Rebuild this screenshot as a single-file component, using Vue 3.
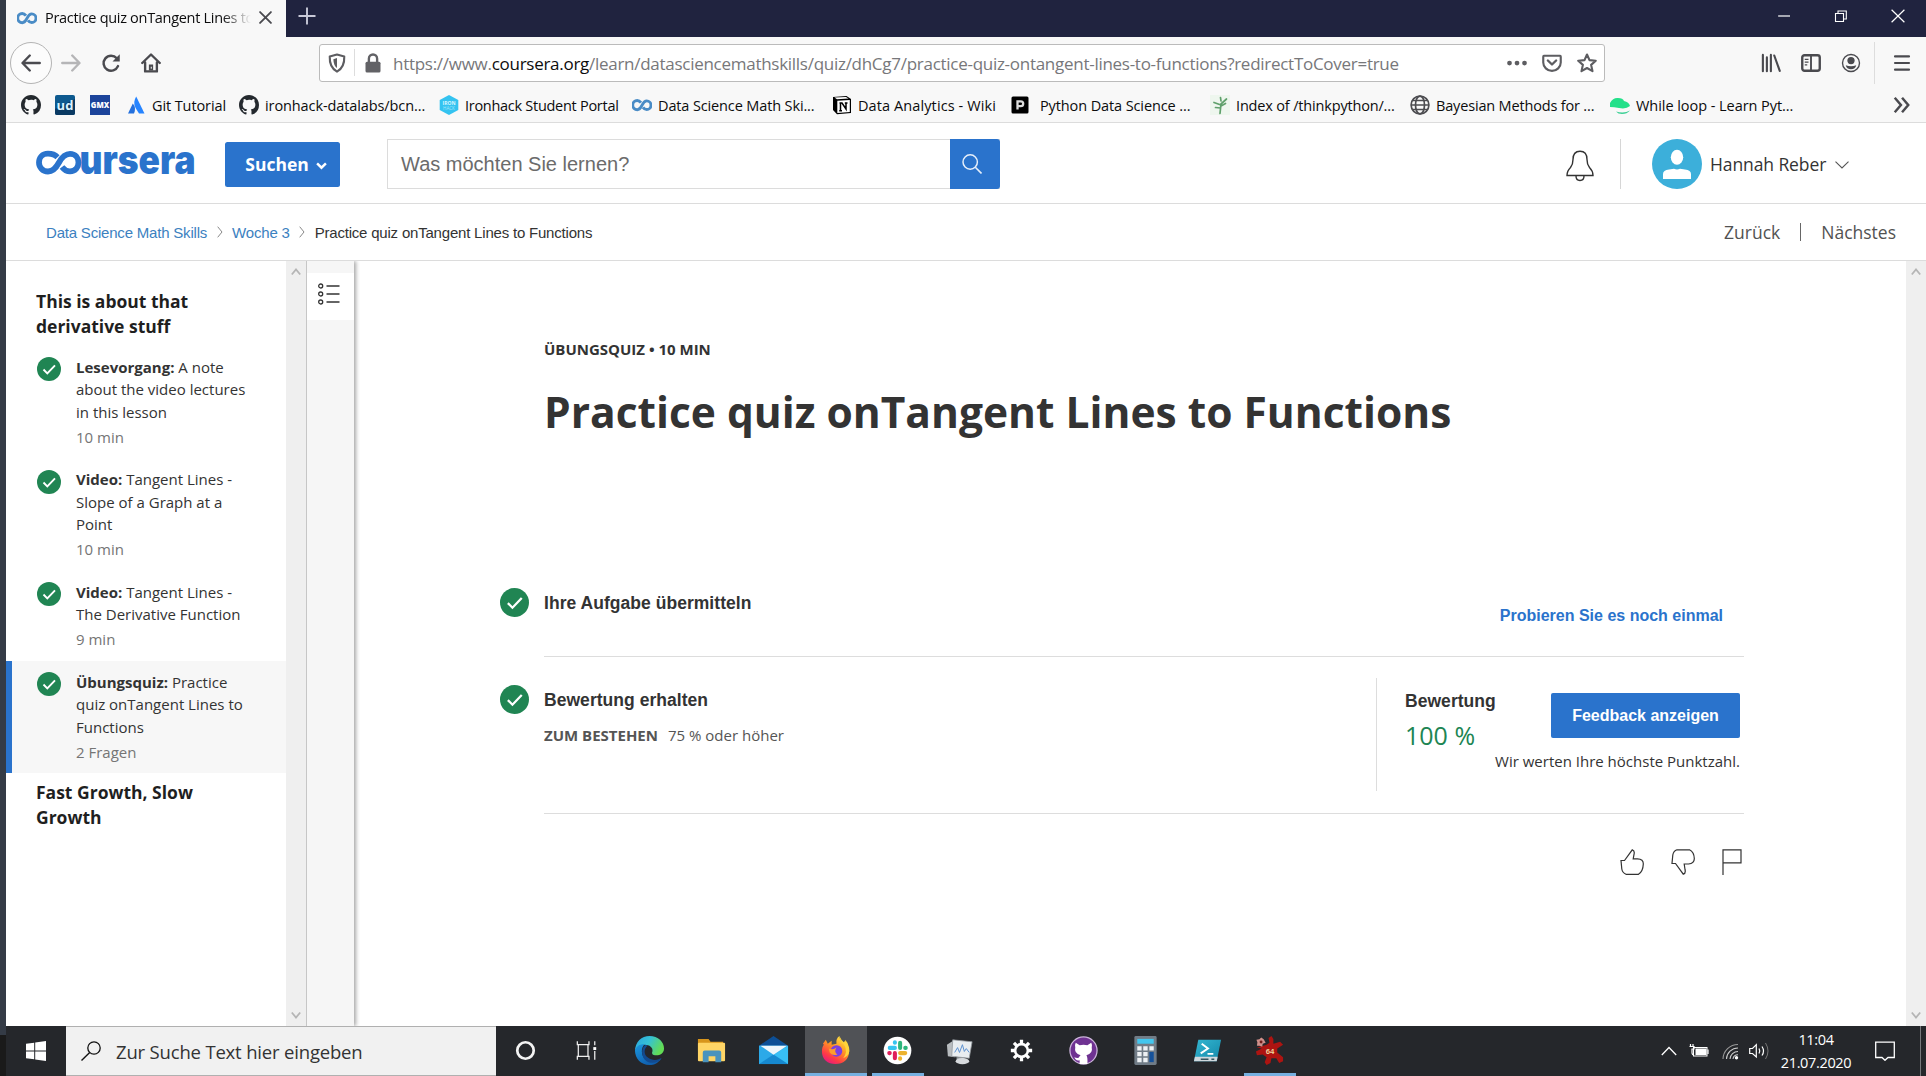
<script setup>
const bookmarks = [
  { icon: 'github', width: 34 },
  { icon: 'ud', width: 35 },
  { icon: 'gmx', width: 36 },
  { icon: 'atlassian', label: 'Git Tutorial', width: 113, track: -0.1 },
  { icon: 'github', label: 'ironhack-datalabs/bcn...', width: 200, track: -0.1 },
  { icon: 'ironhack', label: 'Ironhack Student Portal', width: 193, track: -0.28 },
  { icon: 'infinity', label: 'Data Science Math Ski...', width: 200, track: -0.13 },
  { icon: 'notion', label: 'Data Analytics - Wiki', width: 178, track: 0.1 },
  { icon: 'pbook', label: 'Python Data Science ...', width: 200, track: -0.11, wide: true },
  { icon: 'plant', label: 'Index of /thinkpython/...', width: 200, track: -0.17 },
  { icon: 'globe', label: 'Bayesian Methods for ...', width: 200, track: -0.17 },
  { icon: 'snake', label: 'While loop - Learn Pyt...', width: 210, track: -0.05 },
]

const lessons = [
  { kind: 'Lesevorgang:', title: 'A note about the video lectures in this lesson', meta: '10 min' },
  { kind: 'Video:', title: 'Tangent Lines - Slope of a Graph at a Point', meta: '10 min' },
  { kind: 'Video:', title: 'Tangent Lines - The Derivative Function', meta: '9 min' },
  { kind: 'Übungsquiz:', title: 'Practice quiz onTangent Lines to Functions', meta: '2 Fragen', active: true },
]

const apps = [
  { icon: 'cortana' },
  { icon: 'taskview' },
  { icon: 'edge' },
  { icon: 'explorer' },
  { icon: 'mail' },
  { icon: 'firefox', state: 'focused' },
  { icon: 'slack', state: 'running' },
  { icon: 'monitor' },
  { icon: 'gear' },
  { icon: 'ghdesktop' },
  { icon: 'calc' },
  { icon: 'powershell' },
  { icon: 'irfan', state: 'running' },
]
</script>

<template>
  <svg class="defs" width="0" height="0" aria-hidden="true">
    <defs>
      <linearGradient id="gEdgeA" x1="0" y1="0" x2="1" y2="0.4">
        <stop offset="0" stop-color="#2aa5e0" /><stop offset="0.5" stop-color="#35c1d6" /><stop offset="1" stop-color="#62dc56" />
      </linearGradient>
      <linearGradient id="gEdgeB" x1="0" y1="0" x2="0.6" y2="1">
        <stop offset="0" stop-color="#1b98e0" /><stop offset="1" stop-color="#0f5cab" />
      </linearGradient>
      <linearGradient id="gFox" x1="0.8" y1="0" x2="0.2" y2="1">
        <stop offset="0" stop-color="#fff04a" /><stop offset="0.4" stop-color="#ff9a22" /><stop offset="0.75" stop-color="#ff3b45" /><stop offset="1" stop-color="#e31587" />
      </linearGradient>
      <linearGradient id="gPs" x1="0" y1="0" x2="1" y2="1">
        <stop offset="0" stop-color="#35b7d2" /><stop offset="1" stop-color="#1287a8" />
      </linearGradient>
    </defs>
    <symbol id="infinity" viewBox="0 0 20 20">
      <path d="M9 7.400C7.600 5.600 6.400 5.200 5.300 5.200A4.600 4.600 0 0 0 5.300 14.400C10.300 14.400 9.600 5.600 14.700 5.600A4.300 4.300 0 0 1 14.700 14.200C13.400 14.200 12 13.400 11 12" fill="none" stroke="#4a8cc6" stroke-width="2.900" transform="translate(0 .3)" />
    </symbol>
    <symbol id="github" viewBox="0 0 16 16">
      <path fill="#24292e" d="M8 0C3.58 0 0 3.58 0 8c0 3.54 2.29 6.53 5.47 7.59.4.07.55-.17.55-.38 0-.19-.01-.82-.01-1.49-2.01.37-2.53-.49-2.69-.94-.09-.23-.48-.94-.82-1.13-.28-.15-.68-.52-.01-.53.63-.01 1.08.58 1.23.82.72 1.21 1.87.87 2.33.66.07-.52.28-.87.51-1.07-1.78-.2-3.64-.89-3.64-3.95 0-.87.31-1.59.82-2.15-.08-.2-.36-1.02.08-2.12 0 0 .67-.21 2.2.82A7.600 7.600 0 0 1 8 3.86c.68 0 1.36.09 2 .27 1.53-1.04 2.2-.82 2.2-.82.44 1.1.16 1.92.08 2.12.51.56.82 1.27.82 2.15 0 3.07-1.87 3.75-3.65 3.95.29.25.54.73.54 1.48 0 1.07-.01 1.93-.01 2.2 0 .21.15.46.55.38A8.010 8.010 0 0 0 16 8c0-4.42-3.58-8-8-8z" />
    </symbol>
    <symbol id="ud" viewBox="0 0 20 20">
      <rect width="20" height="20" rx="2" fill="#0e5a8f" /><path d="M0 14L20 4v14a2 2 0 0 1-2 2H2a2 2 0 0 1-2-2z" fill="#0a3a63" />
    </symbol>
    <symbol id="gmx" viewBox="0 0 20 20"><rect width="20" height="20" fill="#1c449b" /></symbol>
    <symbol id="atlassian" viewBox="0 0 20 20">
      <path d="M10.200 1.500Q6.500 7.500 9.600 13L13 18.500H18.500Z" fill="#2684ff" /><path d="M6.800 8.500Q10.500 12.500 8 18.500H2Z" fill="#2470dd" />
    </symbol>
    <symbol id="ironhack" viewBox="0 0 20 20"><path d="M10 0L19.300 5V15L10 20L.7 15V5Z" fill="#34c3f0" /></symbol>
    <symbol id="notion" viewBox="0 0 20 20">
      <path d="M1 2L14.500 1L19 4V18L5 19.300L1 15Z" fill="#000" /><path d="M2.500 2.600L14 1.900L16.500 3.500L5 4.200Z" fill="#fff" /><path d="M5.300 5.700L17.800 5V17L5.300 17.900Z" fill="#fff" />
      <path d="M7.500 8H10L14 14V8.500M8.500 8V15.500M7.200 15.700H10M12.800 8H15.500" fill="none" stroke="#000" stroke-width="1.500" />
    </symbol>
    <symbol id="pbook" viewBox="0 0 20 20">
      <rect x="1.500" y="1.500" width="17" height="17" rx="1.500" fill="#000" /><path d="M7.500 14.500V6.300H10.800A2.400 2.400 0 0 1 10.800 11.100H7.500" fill="none" stroke="#ddd" stroke-width="2.300" />
    </symbol>
    <symbol id="plant" viewBox="0 0 20 20">
      <rect width="20" height="20" fill="#eef6ee" /><path d="M10 18.500L11 9M11 10L4 7.500M10.500 13L5.500 12.500M11 9L16.500 4M11 6L10.500 2.500M11 11L15.500 8.500" stroke="#5fa06b" stroke-width="1.700" fill="none" stroke-linecap="round" />
    </symbol>
    <symbol id="globe" viewBox="0 0 20 20">
      <g fill="none" stroke="#4c4c50" stroke-width="1.700"><circle cx="10" cy="10" r="8.900" /><ellipse cx="10" cy="10" rx="4.500" ry="8.900" /><path d="M1 10H19M2.500 5.500H17.500M2.500 14.500H17.500" stroke-width="1.300" /></g>
    </symbol>
    <symbol id="snake" viewBox="0 0 20 20">
      <path d="M0 12V8Q3 2.500 8 3Q13 3 14 6Q19 7 20 11Q16 14.500 9 13Q4 12 0 12Z" fill="#24e08a" /><path d="M6 16.500Q14 19 20 15.500Q17 19 12 19Q8 19 6 16.500Z" fill="#3cd095" />
    </symbol>
    <symbol id="check" viewBox="0 0 24 24">
      <circle cx="12" cy="12" r="12" fill="#208553" /><path d="M6.500 12.500L10.300 16.300L18 8.300" fill="none" stroke="#fff" stroke-width="1.900" />
    </symbol>

    <symbol id="cortana" viewBox="0 0 32 32"><circle cx="16" cy="16" r="8.500" fill="none" stroke="#f3f3f3" stroke-width="2.800" /></symbol>
    <symbol id="taskview" viewBox="0 0 32 32">
      <path d="M5.500 6.500V10H17.500V6.500M5.500 25.500V22H17.500V25.500M6.500 10V22M16.500 10V22M23.500 6.500V10.500M23.500 16.500V25.500" fill="none" stroke="#eee" stroke-width="1.300" /><rect x="22" y="12.500" width="3" height="3" fill="#fff" />
    </symbol>
    <symbol id="edge" viewBox="0 0 32 32">
      <path d="M1 17C1 7 8 1 16 1C25 1 31 7 31 14C31 19 27 21 23 21C19 21 18 19 19 17C20 13 16 10 11 10C6 10 2 13 1 17Z" fill="url(#gEdgeA)" />
      <path d="M1 16C2 11 7 9 11 9.500C7 13 7 21 12 25C17 29 24 28 28.500 24C25 29 21 31 16 31C7 31 1 24 1 16Z" fill="url(#gEdgeB)" />
      <path d="M14 11C10 14 10 20 14 23C19 27 25 26 28.500 23.500C25 29 18 30 13 27C7 23 7 13 12 10Z" fill="#124a8f" />
    </symbol>
    <symbol id="explorer" viewBox="0 0 32 32">
      <path d="M2 4H13L15 7H28V16H2Z" fill="#d8951c" /><rect x="2" y="8" width="28" height="19" rx="1" fill="#ffd566" />
      <path d="M7 28V18Q7 16 9 16H24Q26 16 26 18V28H20V22H13V28Z" fill="#4a93bd" />
    </symbol>
    <symbol id="mail" viewBox="0 0 32 32">
      <path d="M1 11L16 1L31 11V15H1Z" fill="#0d4f96" /><path d="M1 11H31V30H1Z" fill="#2ca9e8" /><path d="M1 30L31 11V30Z" fill="#38bff5" /><path d="M1 30L16 20L31 30Z" fill="#1689d0" /><path d="M2.500 11H30L16 20.500Z" fill="#eef6fb" />
    </symbol>
    <symbol id="firefox" viewBox="0 0 32 32">
      <path d="M3 9L6 5L8 9L12 6V10L17 9Q16 4 20 1Q20 5 24 8L26 6Q30 12 30 17C30 25 24 30 16 30C8 30 2 25 2 17Q2 12 4 10Z" fill="url(#gFox)" />
      <circle cx="17" cy="16.500" r="6" fill="#7b3fe0" /><path d="M9 14Q14 16 17 13Q14 18 18 20Q13 22 10 18Z" fill="#ff9c2b" /><path d="M20 1Q20 6 25 10Q29 17 24 24Q32 21 30 13Q29 8 26 5V9Q22 6 20 1Z" fill="#ffd43a" />
    </symbol>
    <symbol id="slack" viewBox="0 0 32 32">
      <circle cx="16" cy="16" r="14.300" fill="#fff" />
      <g fill="none" stroke-width="4.200" stroke-linecap="round">
        <path d="M8 13.300H13.300M13.300 7.500V8" stroke="#36c5f0" /><path d="M18.700 8V13.300M24 13.300H24.500" stroke="#2eb67d" /><path d="M18.700 18.700H24M18.700 24V24.500" stroke="#ecb22e" /><path d="M13.300 18.700V24M7.500 18.700H8" stroke="#e01e5a" />
      </g>
    </symbol>
    <symbol id="monitor" viewBox="0 0 32 32">
      <path d="M3 10L11 5V23L4 22Z" fill="#b8bcbf" /><path d="M9 5L29 7L26 24L8 22Z" fill="#e9edf0" stroke="#92989c" stroke-width=".8" /><path d="M11 18L14 13L16 18L19 10L21 17L23 14L26 18" fill="none" stroke="#5b8fd0" stroke-width="1" /><path d="M13 23H21V26H13Z" fill="#9da2a6" /><ellipse cx="19" cy="27" rx="7" ry="3.200" fill="#d7dadd" />
    </symbol>
    <symbol id="gear" viewBox="0 0 32 32">
      <circle cx="16" cy="16" r="6.600" fill="none" stroke="#fff" stroke-width="2.700" />
      <g stroke="#fff" stroke-width="3.400"><path d="M16 5V9M16 23V27M5 16H9M23 16H27M8.200 8.200L11 11M21 21L23.800 23.800M8.200 23.800L11 21M21 11L23.800 8.200" /></g>
    </symbol>
    <symbol id="ghdesktop" viewBox="0 0 32 32">
      <circle cx="16" cy="16" r="14" fill="#6f3292" stroke="#cdb5dc" stroke-width="1.300" />
      <path d="M8 8L12 10.500Q16 9.500 20 10.500L24 8Q25.500 11 24.500 13Q26 19 19 21Q20.500 23 20 30H12V26Q8 27 6.500 23Q9 24 11 23.500Q12 22 13 21Q6 19 7.500 13Q6.500 11 8 8Z" fill="#fff" />
    </symbol>
    <symbol id="calc" viewBox="0 0 32 32">
      <rect x="4.500" y="1" width="23" height="30" rx="1.500" fill="#717c87" /><rect x="7.500" y="4" width="17" height="5" fill="#43c6ee" />
      <path d="M7.500 11.500H12V16H7.500ZM13.700 11.500H18.200V16H13.700ZM20 11.500H24.500V16H20ZM7.500 17.500H12V22H7.500ZM13.700 17.500H18.200V22H13.700ZM7.500 23.500H12V28H7.500ZM13.700 23.500H18.200V28H13.700Z" fill="#eef1f4" /><path d="M20 17.500H24.500V28H20Z" fill="#15519a" />
    </symbol>
    <symbol id="powershell" viewBox="0 0 32 32">
      <path d="M6.500 5H30L25.500 27H2Z" fill="url(#gPs)" /><path d="M3 22.500H26.500L25.500 27H2Z" fill="#cfd8dd" /><path d="M10 9L16.500 14L9 19M16 19.500H22" fill="none" stroke="#fff" stroke-width="2" /><path d="M9 25H17M20 25H23" stroke="#36545f" stroke-width="1.600" />
    </symbol>
    <symbol id="irfan" viewBox="0 0 32 32">
      <path d="M13 10L16 8L15 3L18 1L20 4V9L27 7L30 10L24 14L24 18L30 23V27L26 29L23 24L18 24L17 29L13 31L11 28L13 23L9 20L3 21L2 17L8 14L3 13Z" fill="#ad1411" />
      <path d="M7.500 2.500L10 4.500L12 8L9 9L8.500 12L5.500 11L3 11L3.500 7.500L2.500 5L5.500 4.500Z" fill="#cf8f8a" /><circle cx="7.300" cy="7.300" r="1.500" fill="#701d1a" />
    </symbol>
  </svg>

  <div class="screen">
    <div class="window">
      <div class="edge"></div>
      <div class="browser">
        <header class="tabs">
          <div class="tab">
            <svg class="fav"><use href="#infinity" /></svg>
            <span class="tab-title">Practice quiz onTangent Lines to</span>
            <svg class="tab-x" viewBox="0 0 12 12"><path d="M1 1L11 11M11 1L1 11" fill="none" stroke="#4a4a4f" stroke-width="1.700" stroke-linecap="round" /></svg>
          </div>
          <svg class="plus" viewBox="0 0 18 18"><path d="M9 .5V17.500M.5 9H17.500" stroke="#c8c9d8" stroke-width="1.900" /></svg>
          <div class="winbtns">
            <svg viewBox="0 0 14 14"><path d="M1 7H13" stroke="#fff" stroke-width="1.200" /></svg>
            <svg viewBox="0 0 14 14"><path d="M1.500 4.500H9.500V12.500H1.500ZM4 4.500V2H12.300V10H9.500" fill="none" stroke="#fff" stroke-width="1.100" /></svg>
            <svg viewBox="0 0 14 14"><path d="M.6 .8L13.400 13.200M13.400 .8L.6 13.200" stroke="#fff" stroke-width="1.200" /></svg>
          </div>
        </header>

        <div class="toolbar">
          <span class="nav back"><svg viewBox="0 0 16 16"><path d="M15 8H1.600M7 2L1.200 8L7 14" fill="none" stroke="#4a4a4f" stroke-width="1.900" stroke-linecap="round" stroke-linejoin="round" /></svg></span>
          <span class="nav"><svg viewBox="0 0 16 16"><path d="M1 8H14.400M9 2L14.800 8L9 14" fill="none" stroke="#b5b5b7" stroke-width="1.900" stroke-linecap="round" stroke-linejoin="round" /></svg></span>
          <span class="nav"><svg viewBox="0 0 16 16"><path d="M13.600 10.500A6 6 0 1 1 12.600 4.200" fill="none" stroke="#4a4a4f" stroke-width="2" stroke-linecap="round" /><path d="M15 1V6.800H9.200Z" fill="#4a4a4f" /></svg></span>
          <span class="nav"><svg viewBox="0 0 16 16"><path d="M1 8L8 1.200L15 8M3.300 7.500V14.700H12.700V7.500" fill="none" stroke="#4a4a4f" stroke-width="1.900" stroke-linecap="round" stroke-linejoin="round" /><path d="M6.300 14V9.200H9.700V14" fill="#4a4a4f" /><path d="M8.200 11V12.500" stroke="#fff" stroke-width=".8" /></svg></span>

          <div class="url">
            <svg viewBox="0 0 16 16"><path d="M8 1.200L13.800 2.800Q14.200 11.500 8 14.900Q1.800 11.500 2.200 2.800Z" fill="none" stroke="#5d5d61" stroke-width="1.700" stroke-linejoin="round" /><path d="M8 4V12Q5.200 9.800 5.100 4.900Z" fill="#5d5d61" /></svg>
            <i class="url-sep"></i>
            <svg viewBox="0 0 16 16"><rect x="2" y="7" width="12" height="8.500" rx="1.200" fill="#626266" /><path d="M4.700 7.500V4.500A3.300 3.300 0 0 1 11.300 4.500V7.500" fill="none" stroke="#626266" stroke-width="1.900" /></svg>
            <span class="url-text">https://www.<b>coursera.org</b>/learn/datasciencemathskills/quiz/dhCg7/practice-quiz-ontangent-lines-to-functions?redirectToCover=true</span>
            <div class="url-actions">
              <svg viewBox="0 0 16 16" fill="#5d5d61"><circle cx="2" cy="8" r="1.900" /><circle cx="8" cy="8" r="1.900" /><circle cx="14" cy="8" r="1.900" /></svg>
              <svg viewBox="0 0 16 16" fill="none" stroke="#5d5d61"><path d="M1.500 2.200H14.500Q15 2.200 15 3V7.500A7 6.800 0 0 1 1 7.500V3Q1 2.200 1.500 2.200Z" stroke-width="1.700" /><path d="M4.700 6L8 9.200L11.300 6" stroke-width="1.900" stroke-linecap="round" stroke-linejoin="round" /></svg>
              <svg viewBox="0 0 16 16" fill="none" stroke="#5d5d61"><path d="M8 1.200L10 5.700L15 6.200L11.300 9.500L12.400 14.500L8 12L3.600 14.500L4.700 9.500L1 6.200L6 5.700Z" stroke-width="1.700" stroke-linejoin="round" /></svg>
            </div>
          </div>

          <div class="tools">
            <svg viewBox="0 0 16 16" stroke="#4a4a4f" stroke-width="1.700" stroke-linecap="round"><path d="M1.500 1.500V14.500M4.700 3.500V14.500M7.900 1.500V14.500M10.600 2L15 14.300" /></svg>
            <svg viewBox="0 0 16 16" fill="none" stroke="#4a4a4f"><rect x="1" y="1.800" width="14" height="12.400" rx="1.800" stroke-width="1.900" /><path d="M8 2V14" stroke-width="1.500" /><path d="M3 5H6M3 7.200H6M3 9.400H5" stroke-width="1" /></svg>
            <svg viewBox="0 0 16 16"><circle cx="8" cy="8" r="6.800" fill="none" stroke="#4a4a4f" stroke-width="1.100" /><circle cx="8" cy="6" r="2.900" fill="#4a4a4f" /><path d="M3.800 9.800Q8 11.500 12.200 9.800Q11.500 13 8 13Q4.500 13 3.800 9.800Z" fill="#4a4a4f" /></svg>
            <i class="tool-sep"></i>
            <svg viewBox="0 0 16 16" stroke="#4a4a4f" stroke-width="1.700" stroke-linecap="round"><path d="M2.400 2.700H13.600M2.400 8H13.600M2.400 13.300H13.600" /></svg>
          </div>
        </div>

        <nav class="bookmarks">
          <span v-for="(b, i) in bookmarks" :key="i" class="bookmark" :class="{ wide: b.wide }" :style="{ width: b.width + 'px', letterSpacing: (b.track || 0) + 'px' }">
            <svg viewBox="0 0 20 20">
              <use :href="'#' + b.icon" width="20" height="20" />
              <text v-if="b.icon === 'ud'" class="t-ud" x="10" y="14.800">ud</text>
              <text v-if="b.icon === 'gmx'" class="t-gmx" x="10" y="13" textLength="18.500" lengthAdjust="spacingAndGlyphs">GMX</text>
              <template v-if="b.icon === 'ironhack'">
                <text class="t-iron" x="10" y="9.500">IRON</text>
                <text class="t-hack" x="10" y="15">HACK</text>
              </template>
            </svg>
            <span v-if="b.label">{{ b.label }}</span>
          </span>
          <svg class="more" viewBox="0 0 16 16"><path d="M2 1.500L7.500 8L2 14.500M8.500 1.500L14 8L8.500 14.500" fill="none" stroke="#4a4a4f" stroke-width="2.200" /></svg>
        </nav>

        <header class="site">
          <svg class="logo" viewBox="0 0 160 32">
            <path d="M21.500 9.200C19 6.600 15.500 5.700 12 5.700C6 5.700 3 10 3 14.500C3 19 6.500 23.500 12 23.500C17 23.500 20 20 23 14.500C26 9 29 5.900 34 5.900C39.500 5.900 42.500 10 42.500 14.600C42.500 19 39.500 23.400 34 23.400C30.500 23.400 28 21.600 26 19" fill="none" stroke="#2a73cc" stroke-width="5.800" />
            <text x="43.500" y="26" font-family="Inter" font-weight="900" font-size="39.500" fill="#2a73cc" textLength="116" lengthAdjust="spacingAndGlyphs">ursera</text>
          </svg>
          <button class="explore">Suchen<svg viewBox="0 0 10 10"><path d="M1 3L5 7L9 3" fill="none" stroke="#fff" stroke-width="2.200" /></svg></button>
          <div class="search">
            <span>Was möchten Sie lernen?</span>
            <button class="go"><svg viewBox="0 0 20 20"><circle cx="8.200" cy="8" r="7.200" fill="none" stroke="#e6effa" stroke-width="1.500" /><path d="M13.300 13.200L19.500 19.500" stroke="#e6effa" stroke-width="1.600" /></svg></button>
          </div>
          <div class="account">
            <svg class="bell" viewBox="0 0 28 32"><path d="M1 25.500H27Q27 21 23.500 17.500Q21 14.500 21 9.500Q21 1.200 14 1.200Q7 1.200 7 9.500Q7 14.500 4.500 17.500Q1 21 1 25.500ZM10 26Q10 30.500 14 30.500Q18 30.500 18 26" fill="none" stroke="#333" stroke-width="1.400" /></svg>
            <i class="acct-sep"></i>
            <svg class="avatar" viewBox="0 0 50 50"><circle cx="25" cy="25" r="25" fill="#3cafda" /><ellipse cx="25" cy="18.300" rx="6.200" ry="7.500" fill="#fff" /><path d="M11 40V35Q11 31 17 30.500L22 29.800Q25 31 28 29.800L33 30.500Q39 31 39 35V40Z" fill="#fff" /></svg>
            <span class="name">Hannah Reber</span>
            <svg class="chev" viewBox="0 0 14 8"><path d="M.5 .7L7 7L13.500 .7" fill="none" stroke="#555" stroke-width="1.100" /></svg>
          </div>
        </header>

        <div class="crumbs">
          <a>Data Science Math Skills</a>
          <svg viewBox="0 0 6 12"><path d="M.7 .7L5 6L.7 11.300" fill="none" stroke="#888" stroke-width="1" /></svg>
          <a>Woche 3</a>
          <svg viewBox="0 0 6 12"><path d="M.7 .7L5 6L.7 11.300" fill="none" stroke="#888" stroke-width="1" /></svg>
          <span class="here">Practice quiz onTangent Lines to Functions</span>
          <div class="pager"><span>Zurück</span><i></i><span>Nächstes</span></div>
        </div>

        <div class="body">
          <aside class="lessons">
            <h2>This is about that derivative stuff</h2>
            <div v-for="l in lessons" :key="l.title" class="lesson" :class="{ active: l.active }">
              <svg><use href="#check" /></svg>
              <div class="lesson-text">
                <p><b>{{ l.kind }}</b> {{ l.title }}</p>
                <p class="meta">{{ l.meta }}</p>
              </div>
            </div>
            <h2 class="next">Fast Growth, Slow Growth</h2>
          </aside>
          <div class="scroll">
            <svg viewBox="0 0 10 8"><path d="M.8 6.500L5 1.500L9.200 6.500" /></svg>
            <svg viewBox="0 0 10 8"><path d="M.8 1.500L5 6.500L9.200 1.500" /></svg>
          </div>
          <div class="rail">
            <div class="rail-btn">
              <svg viewBox="0 0 22 22"><g fill="none" stroke="#333" stroke-width="1.300"><circle cx="2.700" cy="3" r="2" /><circle cx="2.700" cy="11" r="2" /><circle cx="2.700" cy="19" r="2" /><path d="M8.500 3H21.500M8.500 11H21.500M8.500 19H21.500" /></g></svg>
            </div>
          </div>
          <main class="content">
            <div class="col">
              <p class="kicker">ÜBUNGSQUIZ • 10 MIN</p>
              <h1>Practice quiz onTangent Lines to Functions</h1>
              <section class="row submit">
                <svg class="tick"><use href="#check" /></svg>
                <h3>Ihre Aufgabe übermitteln</h3>
                <a class="retry">Probieren Sie es noch einmal</a>
              </section>
              <section class="row grade">
                <svg class="tick"><use href="#check" /></svg>
                <div class="pass">
                  <h3>Bewertung erhalten</h3>
                  <p><b>ZUM BESTEHEN</b><span>75 % oder höher</span></p>
                </div>
                <div class="result">
                  <div class="result-top">
                    <div>
                      <h3>Bewertung</h3>
                      <p class="score">100 %</p>
                    </div>
                    <button class="feedback">Feedback anzeigen</button>
                  </div>
                  <p class="note">Wir werten Ihre höchste Punktzahl.</p>
                </div>
              </section>
              <div class="rate">
                <svg width="24" viewBox="0 0 24 26"><path d="M1 11.500H4.500L12.300 .8Q15 1.500 14 5.500L13.200 9.800H17.500Q23.500 10 23.300 15Q23 22.500 18.500 25.300H6Q2.500 24 1.800 20Z" /></svg>
                <svg width="24" viewBox="0 0 24 26"><path d="M1 14.500H4.500L12.300 25.200Q15 24.500 14 20.500L13.200 15H17.500Q23.500 14.500 23.300 9.500Q23 3 18.500 .8H6Q2.500 2 1.800 6Z" /></svg>
                <svg width="20" viewBox="0 0 20 26"><path d="M1 26V.8H19V13.800H1" /></svg>
              </div>
            </div>
          </main>
          <div class="scroll">
            <svg viewBox="0 0 10 8"><path d="M.8 6.500L5 1.500L9.200 6.500" /></svg>
            <svg viewBox="0 0 10 8"><path d="M.8 1.500L5 6.500L9.200 1.500" /></svg>
          </div>
        </div>
      </div>
    </div>

    <footer class="taskbar">
      <div class="tb-edge"></div>
      <div class="start"><svg viewBox="0 0 20 20"><path d="M0 2.800L8.200 1.700V9.500H0ZM9.200 1.500L20 0V9.500H9.200ZM0 10.500H8.200V18.300L0 17.200ZM9.200 10.500H20V20L9.200 18.500Z" fill="#fff" /></svg></div>
      <div class="tb-search">
        <svg viewBox="0 0 20 20"><circle cx="13" cy="7" r="6.200" fill="none" stroke="#111" stroke-width="1.300" /><path d="M8.700 11.500L.5 19.500" stroke="#111" stroke-width="1.400" /></svg>
        <span>Zur Suche Text hier eingeben</span>
      </div>
      <div class="apps">
        <span v-for="a in apps" :key="a.icon" class="app" :class="a.state">
          <svg viewBox="0 0 32 32">
            <use :href="'#' + a.icon" width="32" height="32" />
            <text v-if="a.icon === 'irfan'" class="t-64" x="16.500" y="19.500">64</text>
          </svg>
        </span>
      </div>
      <div class="tray">
        <svg width="16" height="10" viewBox="0 0 16 10"><path d="M.8 9L8 1.500L15.200 9" fill="none" stroke="#fff" stroke-width="1.300" /></svg>
        <svg class="t-bat" width="20" height="16" viewBox="0 0 20 16"><rect x="4.500" y="4.500" width="13.500" height="8.500" fill="none" stroke="#fff" /><rect x="6.500" y="5.500" width="11" height="6.500" fill="#fff" /><path d="M19 6.500V11M1.500 1V3.500M4 1V3.500M.5 3.500H5V6H3V9.500Q3 12 5 11.500" fill="none" stroke="#fff" stroke-width="1.200" /></svg>
        <svg class="t-wifi" width="17" height="17" viewBox="0 0 17 17"><g fill="none" stroke="#ccc" stroke-width="1.100"><path d="M1 16A15 15 0 0 1 16 1.500" stroke="#999" /><path d="M4.500 16A11.500 11.500 0 0 1 16 5" /><path d="M8 16A8 8 0 0 1 16 8.500" /><path d="M11 16A5 5 0 0 1 16 11.800" /></g><circle cx="14.500" cy="14.800" r="1.700" fill="#fff" /></svg>
        <svg class="t-vol" width="20" height="18" viewBox="0 0 20 18"><path d="M.7 6.500H3.500L7.300 2.700V15L3.500 11.500H.7ZM10 6.500Q11.500 9 10 11.500M13 4.500Q16 9 13 13.500" fill="none" stroke="#fff" stroke-width="1.200" /><path d="M16.500 1Q21.500 9 16.500 17" fill="none" stroke="#777" /></svg>
        <div class="clock"><span>11:04</span><span>21.07.2020</span></div>
        <svg class="t-note" width="20" height="20" viewBox="0 0 20 20"><path d="M.7 1.200H19.300V16.500H13L10 19.300L7 16.500H.7Z" fill="none" stroke="#fff" stroke-width="1.300" /></svg>
        <i class="peek"></i>
      </div>
    </footer>
  </div>
</template>

<style>
body { margin: 0; background: #fff; overflow: hidden; }
</style>

<style scoped>
* { box-sizing: border-box; }
.defs { position: absolute; }
h1, h2, h3, p { margin: 0; }
i { display: block; flex: none; }
svg { display: block; flex: none; }
button { border: 0; padding: 0; }
.screen { width: 1926px; height: 1076px; display: flex; flex-direction: column; font-family: "Open Sans", sans-serif; color: #333; overflow: hidden; white-space: nowrap; }
.window { display: flex; height: 1026px; }
.edge { width: 6px; background: #343b46; }
.browser { flex: 1; display: flex; flex-direction: column; min-width: 0; }

.tabs { height: 37px; background: #20233f; display: flex; align-items: flex-start; }
.tab { width: 280px; height: 37px; background: #f8f8f8; display: flex; align-items: center; padding: 0 14px 2px 11px; }
.fav { width: 20px; height: 20px; margin-right: 8px; }
.tab-title { flex: 1; overflow: hidden; font-size: 14.500px; letter-spacing: -.3px; color: #0c0c0d; -webkit-mask-image: linear-gradient(to right, #000 86%, transparent 100%); mask-image: linear-gradient(to right, #000 86%, transparent 100%); }
.tab-x { width: 13px; height: 13px; margin-left: 8px; }
.plus { width: 18px; height: 18px; margin: 7px 0 0 12px; }
.winbtns { margin-left: auto; display: flex; gap: 43px; padding: 9px 21px 0 0; }
.winbtns svg { width: 14px; height: 14px; }

.toolbar { height: 51px; background: #f8f8f8; display: flex; align-items: center; padding: 0 14px 0 4px; }
.nav { width: 40px; height: 40px; display: flex; align-items: center; justify-content: center; }
.nav svg { width: 20px; height: 20px; }
.back { width: 42px; height: 42px; margin-right: -1px; border: 1px solid #b4b4b4; border-radius: 50%; background: #fcfcfc; }
.url { width: 1286px; height: 38px; margin-left: 148px; border: 1px solid #bbb; border-radius: 3px; background: #fff; display: flex; align-items: center; padding: 0 7px; }
.url svg { width: 20px; height: 20px; }
.url-sep { width: 1px; height: 27px; background: #ddd; margin: 0 8px 0 7px; }
.url-text { margin: 2px 0 0 10px; font-size: 17px; letter-spacing: -.275px; color: #77777a; line-height: 34px; }
.url-text b { font-weight: 400; color: #0c0c0d; }
.url-actions { margin-left: auto; display: flex; gap: 15px; }
.tools { margin-left: auto; display: flex; align-items: center; }
.tools svg { width: 20px; height: 20px; margin-left: 20px; }
.tool-sep { width: 1px; height: 42px; background: #ddd; margin: 0 -3px 0 13px; }

.bookmarks { height: 35px; background: #f8f8f8; border-bottom: 1px solid #dcdcdc; display: flex; align-items: center; padding-left: 15px; font-size: 14.500px; color: #0c0c0d; }
.bookmark { display: flex; align-items: center; gap: 6px; flex: none; }
.bookmark svg { width: 20px; height: 20px; }
.bookmark text { text-anchor: middle; font-weight: 700; letter-spacing: 0; fill: #fff; }
.bookmark .t-ud { font-size: 13px; fill: #d9f2ff; }
.bookmark .t-gmx { font-size: 8.500px; font-weight: 800; }
.bookmark .t-iron { font-size: 5px; fill: #d8f5ff; }
.bookmark .t-hack { font-size: 4.500px; font-weight: 400; fill: #a5e6fb; }
.wide { gap: 10px; }
.more { width: 19px; height: 18px; margin-left: 72px; }

.site { height: 81px; border-bottom: 1px solid #dcdcdc; background: #fff; display: flex; align-items: center; padding-left: 30px; }
.logo { width: 160px; height: 32px; margin-top: 1px; }
.explore { width: 115px; height: 45px; margin: 2px 0 0 29px; padding-left: 7px; background: #2a73cc; border-radius: 2.500px; color: #fff; font: 700 17.500px "Open Sans", sans-serif; display: flex; align-items: center; justify-content: center; gap: 7px; }
.explore svg { width: 11px; height: 11px; margin-top: 3px; }
.search { width: 613px; height: 50px; margin: 1px 0 0 47px; border: 1px solid #dcdcdc; border-right: 0; display: flex; align-items: center; padding-left: 13px; font: 20px "Liberation Sans", sans-serif; color: #6b6b6b; }
.search span { margin-top: 2px; }
.go { width: 50px; height: 50px; margin-left: auto; background: #2a73cc; border-radius: 0 3px 3px 0; display: flex; align-items: center; padding-left: 12px; }
.go svg { width: 20px; height: 20px; }
.account { margin-left: auto; display: flex; align-items: center; padding-right: 77px; }
.bell { width: 28px; height: 32px; margin-top: 6px; }
.acct-sep { width: 1px; height: 50px; background: #d6d6d6; margin: 1px 31px 0 26px; }
.avatar { width: 50px; height: 50px; margin-top: 1px; }
.name { width: 116px; margin: 2px 9px 0 8px; font-size: 17.500px; letter-spacing: -.1px; }
.chev { width: 14px; height: 8px; margin-top: 3px; }

.crumbs { height: 57px; border-bottom: 1px solid #dcdcdc; background: #fff; display: flex; align-items: center; padding: 0 30px 0 40px; font: 15px "Liberation Sans", sans-serif; letter-spacing: -.2px; }
.crumbs a { color: #3c81bf; }
.crumbs svg { width: 6px; height: 12px; margin: 0 9.500px; }
.pager { margin-left: auto; display: flex; align-items: center; gap: 20px; font: 17.500px "Open Sans", sans-serif; letter-spacing: 0; color: #525252; }
.pager i { width: 1px; height: 18px; background: #666; }

.body { flex: 1; min-height: 0; display: flex; }
.lessons { width: 280px; padding-top: 28px; font-size: 15px; line-height: 22.500px; white-space: normal; }
.lessons h2 { font-size: 17.500px; line-height: 25px; color: #1f1f1f; padding: 0 60px 0 30px; margin-bottom: 6.500px; }
.lessons .next { margin-top: 7.300px; }
.lesson { display: flex; padding: 10px 25px 10px 24px; border-left: 6px solid transparent; }
.lesson svg { width: 24px; height: 24px; margin: 1.500px 15.500px 0 .5px; }
.lesson-text { width: 180px; }
.lesson .meta { margin-top: 2.500px; color: #757575; }
.active { background: #f7f7f7; border-left-color: #2a73cc; }
.scroll { width: 20px; background: #efefef; display: flex; flex-direction: column; justify-content: space-between; align-items: center; padding: 7px 0; }
.scroll svg { width: 10px; height: 8px; fill: none; stroke: #b5b5b5; stroke-width: 1.800; }
.rail { width: 48px; border-left: 1px solid #c6c6c6; background: #f6f6f6; padding-top: 12px; box-shadow: 2px 0 4px rgba(0, 0, 0, .35); clip-path: inset(0 -6px 0 0); z-index: 1; }
.rail-btn { height: 47px; background: #fff; display: flex; align-items: center; padding: 0 0 5px 11px; }
.rail-btn svg { width: 22px; height: 22px; }

.content { flex: 1; padding: 77px 0 0 190px; }
.col { width: 1200px; }
.kicker { font-size: 15px; font-weight: 700; line-height: 22px; }
h1 { font-size: 42.500px; line-height: 54px; font-weight: 700; margin-top: 25px; height: 54px; }
h3 { font: 700 17.500px/25px "Liberation Sans", sans-serif; letter-spacing: .04px; color: #333; }
.row { display: flex; align-items: flex-start; border-bottom: 1px solid #ddd; }
.submit { margin-top: 131px; height: 87px; padding-top: 20px; }
.submit h3 { margin-top: 1px; }
.tick { width: 29px; height: 29px; margin: -2px 15px 0 -44px; }
.retry { margin: 13px 21px 0 auto; font: 700 16px/25px "Liberation Sans", sans-serif; color: #2a73cc; }
.grade { height: 157px; padding-top: 21px; }
.grade .tick { margin-top: 7px; }
.pass { padding-top: 10px; font-size: 15px; line-height: 22px; color: #555; }
.pass p { display: flex; gap: 10px; margin-top: 11px; }
.result { width: 368px; height: 113px; margin-left: auto; border-left: 1px solid #ddd; padding: 11px 4px 0 28px; }
.result-top { display: flex; justify-content: space-between; height: 61px; }
.score { font-size: 25px; line-height: 34px; color: #208553; margin-top: 4px; }
.feedback { width: 189px; height: 45px; margin-top: 4px; background: #2a73cc; border-radius: 2px; color: #fff; font: 700 16px "Liberation Sans", sans-serif; }
.note { text-align: right; font-size: 15px; line-height: 22px; }
.rate { display: flex; justify-content: flex-end; gap: 27px; padding: 35px 2.500px 0 0; }
.rate svg { height: 26px; fill: none; stroke: #333; stroke-width: 1.200; }

.taskbar { height: 50px; background: #25272b; display: flex; }
.tb-edge { width: 6px; background: linear-gradient(#343b46 0 9px, #1a1a1a 9px); }
.start { width: 60px; display: flex; align-items: center; justify-content: center; }
.start svg { width: 20px; height: 20px; }
.tb-search { width: 430px; background: #f1f1f1; border: 1px solid #b0b0b0; border-width: 1px 0; display: flex; align-items: center; gap: 15px; padding-left: 15px; font-size: 18.500px; letter-spacing: -.18px; color: #333; }
.tb-search svg { width: 20px; height: 20px; }
.apps { display: flex; margin-left: -1.500px; }
.app { width: 62px; display: flex; align-items: center; justify-content: center; }
.app svg { width: 31px; height: 31px; margin-top: -2px; }
.t-64 { font: 700 8px "Liberation Sans", sans-serif; text-anchor: middle; fill: #f0d39a; }
.focused { background: #505256; border-bottom: 3px solid #76b0e0; }
.focused svg { margin-top: 1px; }
.running { width: 52px; margin: 0 5px; border-bottom: 3px solid #76b0e0; }
.running svg { margin-top: 1px; }
.tray { margin-left: auto; display: flex; align-items: center; color: #fff; }
.t-bat { margin-left: 12px; }
.t-wifi { margin-left: 13px; }
.t-vol { margin-left: 10px; }
.clock { width: 80px; margin: 0 19px 1px 7px; display: flex; flex-direction: column; align-items: center; font-size: 14.500px; line-height: 23px; letter-spacing: -.35px; }
.peek { width: 1px; height: 50px; background: #77797c; margin: 0 5px 0 25px; }
</style>
